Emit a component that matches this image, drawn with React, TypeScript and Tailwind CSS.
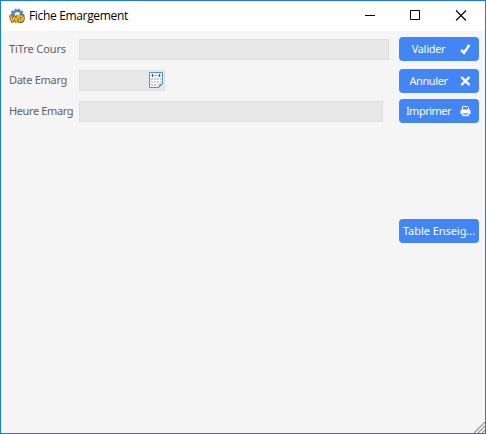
import React from "react";

function AppLogo() {
  return (
    <svg width="16" height="16" viewBox="0 0 16 16" className="shrink-0">
      <path d="M5.5 3V.8h1.8L8.3 2l1-1.2h1.8V3l2-.6 1.2 1.4-.9 1.8 2.1.8V9H1V6.4l1.8-.8-.9-1.8L3.1 2.4Z" fill="#4b86bd" />
      <path d="M5.7 7.5V5.2l1.4-1h2.4l1.4 1v2.3Z" fill="#fff" />
      <path d="M1.3 7.2 3.3 13.5l2-4 2 4L9 7.2M10.3 8v5.5h1c4 0 4-5.5 0-5.5Z" fill="none" stroke="#5b4a20" strokeWidth="2.8" strokeLinejoin="round" />
      <path d="M1.2 6.8 3.3 13l2-3.7 2 3.7L9 6.8M10.3 7.9v5.1h1c3.8 0 3.8-5.1 0-5.1Z" fill="none" stroke="#f5b41c" strokeWidth="1.8" />
    </svg>
  );
}

function CalendarIcon() {
  return (
    <svg width="14" height="16" viewBox="0 0 14 16">
      <path d="M.5.5h13v11l-4 4h-9Z" fill="#fff" stroke="#4499c9" />
      <path d="M1 1h12v4H1Z" fill="#eeefef" />
      <path d="M2 3.5h10" stroke="#b8bcc0" />
      <path d="M3.5 2v3M10.5 2v3" stroke="#505860" />
      <path d="M2 7h10M2 13h7" stroke="#a9c8ff" strokeWidth="2" strokeDasharray="2 1" />
      <path d="M2 10h10" stroke="#c9cbd8" strokeWidth="2" strokeDasharray="2 1" />
      <path d="m9.5 15.5.5-3.5 3.5-.5Z" fill="#83b8da" />
      <path d="m9.5 15.5 4-4" stroke="#285f98" />
    </svg>
  );
}

function CheckIcon() {
  return (
    <svg width="12" height="12" viewBox="0 0 12 12">
      <path d="m1.1 6.8 3 3L9.4 1.9" fill="none" stroke="white" strokeWidth="2.5" />
    </svg>
  );
}

function CrossIcon() {
  return (
    <svg width="12" height="12" viewBox="0 0 12 12">
      <path d="m1.3 2 8.2 8.2m0-8.2-8.2 8.2" stroke="white" strokeWidth="2.4" />
    </svg>
  );
}

function PrinterIcon() {
  return (
    <svg width="12" height="12" viewBox="0 0 12 12">
      <path d="M2.5 5V1.5h4.8l1.2 1.2V5" fill="#4285f4" stroke="white" />
      <path d="M1.5 4.5h8l1 1V9h-2V7.5h-6V9h-2V5.5Z" fill="white" />
      <path d="M2.5 7.5h6v3.2h-6Z" fill="#4285f4" stroke="white" />
      <path d="M3 9.2h5" stroke="white" strokeWidth=".8" />
    </svg>
  );
}

function Field({ label, spacing, width, children }: { label: string; spacing: string; width: string; children?: React.ReactNode }) {
  return (
    <div className="flex h-[21px] items-center">
      <span className={`w-[70px] shrink-0 whitespace-nowrap pb-0.5 text-[11px] leading-[19px] text-[#606266] ${spacing}`}>{label}</span>
      <div className={`flex h-[21px] items-start justify-end border border-[#dedede] bg-[#e8e8e8] pr-px pt-px ${width}`}>{children}</div>
    </div>
  );
}

function ActionButton({ label, className, icon }: { label: string; className: string; icon?: React.ReactNode }) {
  return (
    <button className={`flex h-6 w-20 items-center rounded-[4px] bg-[#4285f4] text-[11px] leading-[24px] text-white ${className}`}>
      <span className={`flex-1 whitespace-nowrap text-center ${icon ? "pr-0.5" : ""}`}>{label}</span>
      {icon && <span className="mr-[7px] w-3 shrink-0">{icon}</span>}
    </button>
  );
}

export default function App() {
  return (
    <div className="flex h-[434px] w-[486px] flex-col overflow-hidden border border-[#1a7fd3] bg-[#f5f5f5] font-['Noto_Sans',sans-serif]">
      <header className="flex h-[30px] shrink-0 items-center bg-white pl-2">
        <AppLogo />
        <h1 className="ml-1 flex-1 whitespace-nowrap font-['Open_Sans',sans-serif] text-[12px] tracking-[-0.34px] text-black">Fiche Emargement</h1>
        <div className="flex pr-px">
          <svg width="46" height="28" viewBox="0 0 46 28"><path d="M19 13.5h10" stroke="black" /></svg>
          <svg width="46" height="28" viewBox="0 0 46 28"><path d="M18.5 8.5h9v9h-9Z" fill="none" stroke="black" /></svg>
          <svg width="46" height="28" viewBox="0 0 46 28"><path d="m18 8.5 10 10m0-10-10 10" stroke="black" strokeWidth="1.1" /></svg>
        </div>
      </header>
      <main className="flex flex-1 justify-between pl-2 pr-1.5">
        <div className="flex flex-col gap-[10px] pt-2">
          <Field label="TiTre Cours" spacing="tracking-[-0.1px]" width="w-[310px]" />
          <Field label="Date Emarg" spacing="tracking-[-0.3px]" width="w-[86px]"><CalendarIcon /></Field>
          <Field label="Heure Emarg" spacing="tracking-[-0.37px]" width="w-[304px]" />
        </div>
        <div className="flex flex-col pt-1.5">
          <ActionButton label="Valider" className="tracking-[-0.3px]" icon={<CheckIcon />} />
          <ActionButton label="Annuler" className="mt-2 tracking-[-0.4px]" icon={<CrossIcon />} />
          <ActionButton label="Imprimer" className="mt-1.5 tracking-[-0.5px]" icon={<PrinterIcon />} />
          <ActionButton label="Table Enseig..." className="mt-24 tracking-[-0.05px]" />
        </div>
      </main>
      <footer className="flex h-[11px] shrink-0 justify-end">
        <svg width="11" height="11" viewBox="0 0 11 11"><path d="M0 11 11 0M4 11l7-7M8 11l3-3" stroke="#a0a0a0" strokeWidth="1.4" /></svg>
      </footer>
    </div>
  );
}
